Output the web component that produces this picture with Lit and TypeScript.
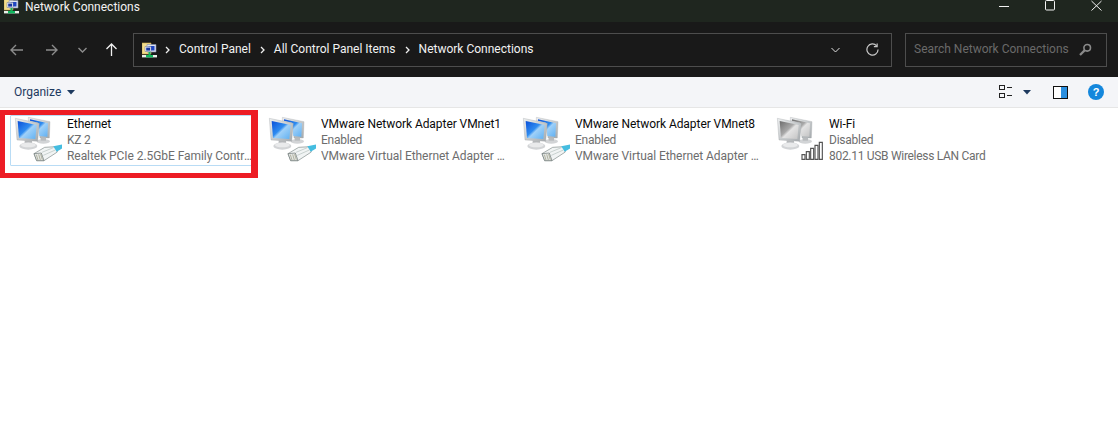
import { LitElement, html, css, svg } from "lit";
import { customElement } from "lit/decorators.js";

const folderIcon = svg`<svg class="small" viewBox="0 0 15 16" width="15" height="16">
  <path d="M0 1h9v11H0z" fill="#f1dc8c" stroke="#c8a94e" stroke-width=".6"/>
  <path d="M5 2.5h9v7.5H5z" fill="#dfe4f0" stroke="#7f8aa8" stroke-width=".6"/>
  <path d="M6.5 4h6v4.5h-6z" fill="#1f45c4"/>
  <path d="M3 4.5h6v5H3z" fill="#e8ebf5" stroke="#6a7594" stroke-width=".5"/>
  <path d="M4.2 5.6h3.8v3H4.2z" fill="#17359f"/>
  <path d="M6.5 10h2v3h-2z" fill="#11b35a"/>
  <path d="M0 13h15v2.4H0z" fill="#e9efe9"/><path d="M4 13h7v2.4H4z" fill="#10b860"/>
</svg>`;

const pc = (idp: string, grey: boolean) => svg`
  <defs>
    <linearGradient id="${idp}s" x1="0" y1="0" x2="1" y2="1">
      <stop offset="0" stop-color="${grey ? "#6c6c6c" : "#0a4fd8"}"/>
      <stop offset=".45" stop-color="${grey ? "#a9a9a9" : "#2f8cf0"}"/>
      <stop offset=".55" stop-color="${grey ? "#e3e3e3" : "#9fd0f8"}"/>
      <stop offset="1" stop-color="${grey ? "#c4c4c4" : "#5fb0f2"}"/>
    </linearGradient>
    <linearGradient id="${idp}f" x1="0" y1="0" x2="1" y2="1">
      <stop offset="0" stop-color="#eef0f1"/><stop offset="1" stop-color="#a4a9ac"/>
    </linearGradient>
  </defs>
  <path d="M85 22 150 35 148 84 120 84 116 40 85 32z" fill="url(#${idp}f)" stroke="#a0a4a6"/>
  <path d="M90 28 144 40 142 80 118 78 114 38 90 32z" fill="url(#${idp}s)"/>
  <ellipse cx="130" cy="94" rx="20" ry="7" fill="#d2d4d6"/>
  <path d="M122 82h16v10h-16z" fill="#b8bbbd"/>
  <path d="M46 25 118 40 113 94 51 90z" fill="url(#${idp}f)" stroke="#9a9ea1"/>
  <path d="M53 33 110 45 106 87 57 84z" fill="url(#${idp}s)"/>
  <path d="M74 91h22v9H74z" fill="#b4b7b9"/>
  <ellipse cx="85" cy="108" rx="27" ry="11" fill="#d2d4d6"/>
  <ellipse cx="85" cy="105" rx="22" ry="7" fill="#e9eaeb"/>`;

const plug = svg`
  <path d="M102 131 134 112 168 110 172 126 132 152 110 152z" fill="#f1f4f4" stroke="#7d8886" stroke-width="2"/>
  <path d="M102 131 124 129 132 152 110 152z" fill="#e4e7e5" stroke="#66716f" stroke-width="2"/>
  <path d="M109 134l5 16M116 133l5 17M122 132l5 17" stroke="#8f8f70" stroke-width="1.8"/>
  <path d="M126 127 160 113M130 136 166 120" stroke="#b4bfbd" stroke-width="2"/>
  <path d="M160 109 187 103 187 115 170 125z" fill="#45bde0"/>`;

const bars = svg`<g fill="#fff" stroke="#555" stroke-width="3.5">
  <path d="M120 134h9v14h-9z"/><path d="M133 125h9v23h-9z"/><path d="M146 115h9v33h-9z"/><path d="M159 106h9v42h-9z"/><path d="M172 97h9v51h-9z"/>
</g>`;

interface Adapter { id: string; name: string; status: string; device: string; wifi?: boolean; selected?: boolean }
const adapters: Adapter[] = [
  { id: "a", name: "Ethernet", status: "KZ 2", device: "Realtek PCIe 2.5GbE Family Controller", selected: true },
  { id: "b", name: "VMware Network Adapter VMnet1", status: "Enabled", device: "VMware Virtual Ethernet Adapter for VMnet1" },
  { id: "c", name: "VMware Network Adapter VMnet8", status: "Enabled", device: "VMware Virtual Ethernet Adapter for VMnet8" },
  { id: "d", name: "Wi-Fi", status: "Disabled", device: "802.11 USB Wireless LAN Card", wifi: true },
];

@customElement("app-root")
export class AppRoot extends LitElement {
  static styles = css`
    :host { display: block; position: relative; height: 430px; overflow: hidden; background: #fff;
      font-family: "Roboto", "Noto Sans", sans-serif; font-size: 12px; }
    .title { height: 22px; background: #1f261f; display: flex; align-items: flex-start; color: #f2f2f2; }
    .title .small { margin: -2px 0 0 4px; flex: none; }
    .title span { margin: 0 0 0 6px; line-height: 14px; }
    .controls { margin-left: auto; display: flex; gap: 35px; padding-right: 16px; }
    .controls svg { display: block; }
    .nav { height: 55px; background: #191919; display: flex; align-items: center; box-sizing: border-box; padding: 0 11px 0 10px; }
    .navbtn { flex: none; display: block; }
    .addr { flex: 1; height: 34px; box-sizing: border-box; border: 1px solid #4d4d4d; display: flex; align-items: center;
      margin-left: 16px; padding-left: 8px; color: #f2f2f2; }
    .crumb { margin-right: 9px; white-space: nowrap; line-height: 16px; margin-top: -1px; }
    .sep { margin-right: 9px; flex: none; display: block; }
    .addr .small { margin-right: 8px; flex: none; }
    .addr .end { margin-left: auto; display: flex; align-items: center; gap: 26px; padding-right: 12px; }
    .search { flex: none; width: 202px; height: 34px; margin-left: 13px; box-sizing: border-box; border: 1px solid #4d4d4d;
      display: flex; align-items: center; justify-content: space-between; padding: 0 14px 0 8px; color: #6a6a6a; }
    .search span { margin-top: -1px; }
    .tools { height: 30px; background: #f4f5f8; border-bottom: 1px solid #e6e6e6; display: flex; align-items: center;
      padding: 0 14px; color: #1e3a5f; }
    .tools .caret { margin-left: 6px; }
    .tright { margin-left: auto; display: flex; align-items: center; }
    .items { display: grid; grid-template-columns: repeat(4, 254px); padding: 7px 0 0 10px; }
    .item { height: 51px; width: 244px; display: flex; box-sizing: border-box; border: 1px solid transparent; padding: 0; }
    .item.sel { border-color: #b9dcf5; border-radius: 1px; background: #fff; }
    .item svg { flex: none; display: block; margin: -6px 0 0 -11px; }
    .meta { margin-left: 5px; min-width: 0; flex: 1; }
    .line { line-height: 16px; height: 16px; white-space: nowrap; overflow: hidden; text-overflow: ellipsis; color: #6d6d6d; letter-spacing: -.06px; }
    .name { color: #0a0a0a; }
    .status { letter-spacing: -.25px; }
    .narrow { letter-spacing: -.3px; }
    .mark { position: absolute; left: 0; top: 110px; width: 258px; height: 68px; box-sizing: border-box; border: 5px solid #ed1c24; border-right-width: 7px; pointer-events: none; }
  `;
  render() {
    const sep = svg`<svg class="sep" width="5" height="8" viewBox="0 0 5 8" fill="none" stroke="#f0f0f0" stroke-width="1.3"><path d="M1 1l3 3-3 3"/></svg>`;
    return html`
      <div class="title">
        ${folderIcon}<span>Network Connections</span>
        <div class="controls">
          <svg width="11" height="12" viewBox="0 0 11 12"><path d="M0 6.5h10" stroke="#f2f2f2"/></svg>
          <svg width="11" height="12" viewBox="0 0 11 12"><rect x=".5" y=".5" width="9" height="9.5" rx="1" fill="none" stroke="#f2f2f2"/></svg>
          <svg width="11" height="12" viewBox="0 0 11 12"><path d="M.5 1 10.5 10.5M10.5 1 .5 10.5" stroke="#f2f2f2"/></svg>
        </div>
      </div>
      <div class="nav">
        <svg class="navbtn" width="13" height="12" viewBox="0 0 13 12" fill="none" stroke="#8c8c8c" stroke-width="1.4"><path d="M1 6h12M6 1 1 6l5 5"/></svg>
        <svg class="navbtn" style="margin-left:23px" width="12" height="12" viewBox="0 0 12 12" fill="none" stroke="#8c8c8c" stroke-width="1.4"><path d="M0 6h11M6 1l5 5-5 5"/></svg>
        <svg class="navbtn" style="margin-left:20px" width="9" height="6" viewBox="0 0 9 6" fill="none" stroke="#8c8c8c" stroke-width="1.4"><path d="M.5 1 4.5 5 8.5 1"/></svg>
        <svg class="navbtn" style="margin-left:19px" width="11" height="13" viewBox="0 0 11 13" fill="none" stroke="#f0f0f0" stroke-width="1.3"><path d="M5.5 13V1M.5 6l5-5 5 5"/></svg>
        <div class="addr">
          ${folderIcon}
          ${sep}
          <span class="crumb">Control Panel</span>
          ${sep}
          <span class="crumb">All Control Panel Items</span>
          ${sep}
          <span class="crumb">Network Connections</span>
          <div class="end">
            <svg width="9" height="6" viewBox="0 0 9 6" fill="none" stroke="#e0e0e0"><path d="M.5 1 4.5 5 8.5 1"/></svg>
            <svg width="13" height="13" viewBox="0 0 14 14" fill="none" stroke="#c8c8c8" stroke-width="1.3"><path d="M11.5 3A6 6 0 1 0 13 7"/><path d="M12 .5V4H8.5" /></svg>
          </div>
        </div>
        <div class="search">
          <span>Search Network Connections</span>
          <svg width="13" height="13" viewBox="0 0 13 13" fill="none" stroke="#8a8a8a"><circle cx="8.2" cy="4.8" r="3.3" stroke-width="1.6"/><path d="M5.6 7.4 1 12" stroke-width="2.2"/></svg>
        </div>
      </div>
      <div class="tools">
        <span>Organize</span>
        <svg class="caret" width="8" height="5" viewBox="0 0 8 5"><path d="M0 0h8L4 4.5z" fill="#1e3a5f"/></svg>
        <div class="tright">
          <svg width="14" height="14" viewBox="0 0 14 14" fill="none" stroke="#222"><rect x=".5" y=".5" width="5" height="4"/><rect x=".5" y="8.5" width="5" height="4"/><path d="M8 2.5h5M8 10.5h5"/></svg>
          <svg style="margin-left:10px" width="8" height="5" viewBox="0 0 8 5"><path d="M0 0h8L4 4.5z" fill="#1e3a5f"/></svg>
          <svg style="margin-left:22px" width="15" height="13" viewBox="0 0 15 13"><rect x=".5" y=".5" width="14" height="12" fill="#fff" stroke="#111"/><rect x="8" y="1" width="6" height="11" fill="#2a8fe0"/></svg>
          <svg style="margin-left:20px" width="16" height="16" viewBox="0 0 16 16"><circle cx="8" cy="8" r="8" fill="#1487dc"/><text x="8" y="12" text-anchor="middle" font-size="11" font-weight="700" fill="#fff" font-family="Liberation Sans, sans-serif">?</text></svg>
        </div>
      </div>
      <div class="items">
        ${adapters.map((a) => html`
          <div class="item ${a.selected ? "sel" : ""}">
            <svg width="62" height="54" viewBox="0 0 186 162">
              ${pc(a.id, !!a.wifi)}${a.wifi ? bars : plug}
            </svg>
            <div class="meta">
              <div class="line name">${a.name}</div>
              <div class="line status">${a.status}</div>
              <div class="line ${a.wifi ? "narrow" : ""}">${a.device}</div>
            </div>
          </div>`)}
      </div>
      <div class="mark"></div>
    `;
  }
}
